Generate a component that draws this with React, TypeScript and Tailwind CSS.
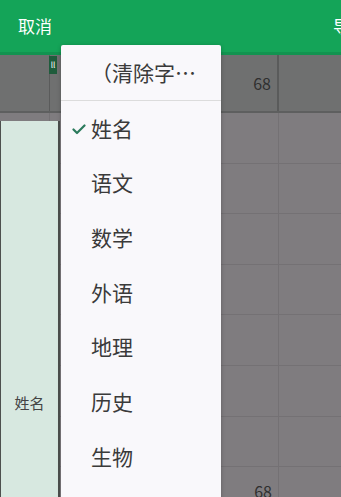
const subjects = ["姓名", "语文", "数学", "外语", "地理", "历史", "生物", "化学"];

function GridRow({ top, value }: { top?: boolean; value?: string }) {
  return (
    <div
      className={
        top
          ? "flex h-[58px] border-b-2 border-[#5e5f5f] bg-[#6f7070]"
          : "flex h-[50.6px] border-b border-[#747174] bg-[#7f7c7f]"
      }
    >
      <div className={top ? "relative w-[50px] border-r border-[#5a5b5b]" : "w-[50px] border-r border-[#747174]"}>
        {top && (
          <div className="absolute left-[49px] top-[1px] flex h-[18px] w-[8px] items-center justify-center bg-[#1f5c3c] text-[8px] leading-none text-white">
            ll
          </div>
        )}
      </div>
      <div
        className={
          "flex w-[229px] items-center justify-end pr-[6px] text-[16px] text-[#2f2f2f] " +
          (top ? "border-r-2 border-[#5a5b5b]" : "border-r border-[#747174]")
        }
      >
        {value}
      </div>
      <div className="flex-1" />
    </div>
  );
}

function Check() {
  return (
    <svg width="14" height="11" viewBox="0 0 14 11" className="absolute left-[11px] top-[23px]">
      <path d="M1.5 5.5 L5 9 L12.5 1.5" fill="none" stroke="#2b7a5c" strokeWidth="2.2" strokeLinecap="round" strokeLinejoin="round" />
    </svg>
  );
}

export default function App() {
  return (
    <div
      className="relative h-[497px] w-[341px] overflow-hidden bg-[#7f7c7f]"
      style={{ fontFamily: '"Noto Sans CJK SC", "Noto Sans", sans-serif' }}
    >
      <header className="flex h-[55px] items-center justify-between border-b-[3px] border-[#129350] bg-[#14a458] pl-[18px] text-[17px] text-white">
        <span>取消</span>
        <span className="-mr-[9px]">导</span>
      </header>

      <div className="flex flex-col">
        <GridRow top value="68" />
        <GridRow />
        <GridRow />
        <GridRow />
        <GridRow />
        <GridRow />
        <GridRow />
        <GridRow />
        <div className="flex h-[60px] bg-[#7f7c7f]">
          <div className="w-[50px] border-r border-[#747174]" />
          <div className="flex w-[229px] justify-end border-r border-[#747174] pr-[6px] pt-[10px] text-[16px] leading-[28px] text-[#2f2f2f]">
            68
          </div>
        </div>
      </div>

      {/* frozen column being dragged */}
      <div className="absolute left-0 top-[121px] flex h-[376px] w-[60px] items-end justify-center border-l border-r-2 border-[#4d504e] bg-[#d7e8e0] pb-[83px] text-[15px] text-[#444]">
        姓名
      </div>

      {/* column picker menu */}
      <div className="absolute left-[61px] top-[45px] w-[160px] rounded-[2px] bg-[#f9f8fb] shadow-[0_1px_4px_rgba(0,0,0,0.25)]">
        <div className="flex h-[56px] items-center border-b border-[#dcdcdc] pl-[30px] text-[21px] text-[#3a3a3a]">
          （清除字…
        </div>
        {subjects.map((s, i) => (
          <div key={s} className="relative flex h-[54.7px] items-center pl-[30px] text-[21px] text-[#3a3a3a]">
            {i === 0 && <Check />}
            {s}
          </div>
        ))}
      </div>
    </div>
  );
}
